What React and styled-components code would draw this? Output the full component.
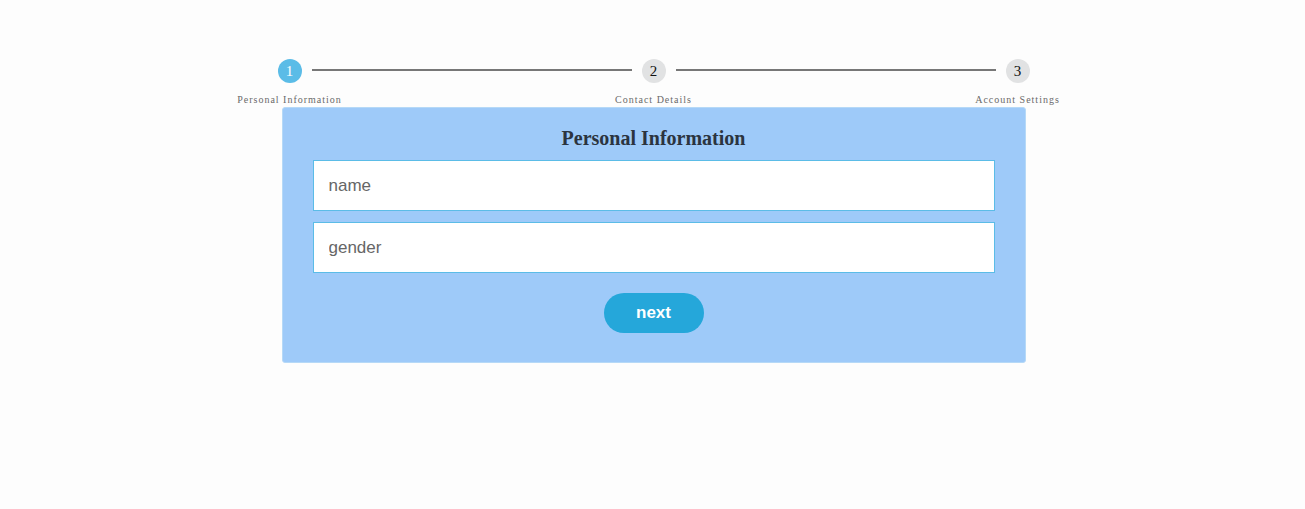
import styled, { createGlobalStyle } from 'styled-components';

const GlobalStyle = createGlobalStyle`
    body {
        margin: 0;
        background: #fdfdfd;
        font-family: "Liberation Serif", "Times New Roman", serif;
    }
`

const Page = styled.div`
    box-sizing: border-box;
    min-height: 100vh;
    padding-top: 59px;
    display: flex;
    flex-direction: column;
    align-items: center;
`

const Stepper = styled.div`
    width: 752px;
    margin-left: 2px;
    display: grid;
    grid-template-columns: 24px 1fr 24px 1fr 24px;
    column-gap: 10px;
    align-items: start;
`

const Step = styled.div`
    width: 24px;
    display: flex;
    flex-direction: column;
    align-items: center;
`

const Circle = styled.div`
    width: 24px;
    height: 24px;
    border-radius: 50%;
    display: flex;
    align-items: center;
    justify-content: center;
    font-size: 15px;
    background: ${p => p.active ? '#5bbce7' : '#e1e2e3'};
    color: ${p => p.active ? '#ffffff' : '#111111'};
`

const StepLabel = styled.div`
    margin-top: 11px;
    white-space: nowrap;
    font-size: 10px;
    line-height: 12px;
    letter-spacing: 1px;
    color: #6a6a6a;
`

const Line = styled.div`
    height: 2px;
    margin-top: 10px;
    background: #777777;
`

const Card = styled.div`
    width: 682px;
    margin-top: 1px;
    margin-left: 2px;
    padding: 19px 30px 29px;
    background: #9ecaf9;
    border: 1px solid #b6d9f7;
    border-radius: 3px;
    display: flex;
    flex-direction: column;
    align-items: center;
`

const Title = styled.h2`
    margin: 0 0 10px;
    font-size: 20px;
    line-height: 23px;
    font-weight: bold;
    color: #2b3440;
`

const Input = styled.input`
    box-sizing: border-box;
    width: 100%;
    height: 51px;
    margin-bottom: ${p => p.last ? '0' : '11px'};
    padding: 0 15px;
    border: 1px solid #5bbce7;
    background: #ffffff;
    font-family: "Liberation Sans", Arial, sans-serif;
    font-size: 17px;
    color: #333;

    &::placeholder {
        color: #666666;
    }

    &:focus {
        outline: none;
    }
`

const NextButton = styled.button`
    margin-top: 20px;
    width: 100px;
    height: 40px;
    border: none;
    border-radius: 20px;
    background: #25a7da;
    color: #ffffff;
    font-family: "Liberation Sans", Arial, sans-serif;
    font-size: 17px;
    font-weight: bold;
    cursor: pointer;
`

const steps = ['Personal Information', 'Contact Details', 'Account Settings']

function App() {
    return (
        <Page>
            <GlobalStyle/>
            <Stepper>
                {steps.map((label, i) => [
                    i > 0 && <Line key={'l' + i}/>,
                    <Step key={label}>
                        <Circle active={i === 0}>{i + 1}</Circle>
                        <StepLabel>{label}</StepLabel>
                    </Step>
                ])}
            </Stepper>
            <Card>
                <Title>Personal Information</Title>
                <Input type="text" placeholder="name"/>
                <Input type="text" placeholder="gender" last/>
                <NextButton>next</NextButton>
            </Card>
        </Page>
    )
}

export default App;
